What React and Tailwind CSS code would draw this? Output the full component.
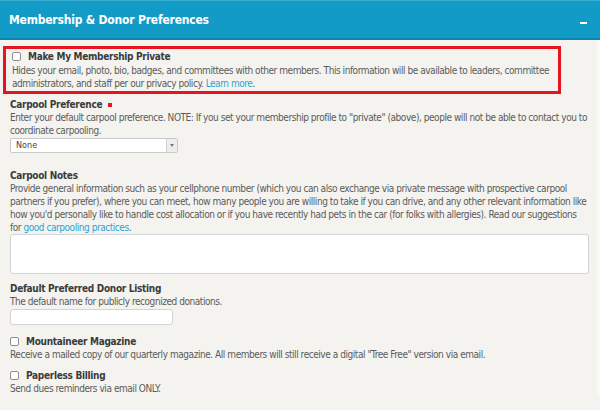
function Box() {
  return <span className="inline-block h-[9px] w-[9px] shrink-0 rounded-[2px] border border-[#8d8d8d] bg-white" />;
}

export default function App() {
  const text = "text-[10px] leading-[13px] tracking-[-0.45px] text-[#5b5b5b]";
  const label = "text-[10px] leading-[13px] tracking-[-0.3px] font-bold text-[#3b3b3b]";

  return (
    <div className="h-[410px] w-[600px] overflow-hidden bg-[#f4f3ef] font-['DejaVu_Sans_Condensed','Liberation_Sans',sans-serif]">
      <div className="flex h-[40px] items-center justify-between border-t border-[#3aaed3] border-b-2 border-b-[#0c86ab] bg-[#139bc7] pl-[9px] pr-[13px]">
        <h2 className="text-[12px] font-bold tracking-[-0.2px] text-white">Membership &amp; Donor Preferences</h2>
        <span className="mt-[6px] h-[2px] w-[7px] bg-white" />
      </div>

      <div className="border-r-[3px] border-[#fbfaf8] pt-[6px]">
        <div className="ml-[3px] w-[558px] border-[3px] border-[#e5141f] px-[6px] pt-[1px] pb-[1px]">
          <div className="flex items-center gap-[7px]">
            <Box />
            <span className={label}>Make My Membership Private</span>
          </div>
          <p className={`${text} mt-[1px]`}>
            Hides your email, photo, bio, badges, and committees with other members. This information will be available to leaders, committee administrators, and staff per our privacy policy. <span className="text-[#2ba3d6]">Learn more</span>.
          </p>
        </div>

        <div className="px-[10px] pr-[9px]">
          <div className="mt-[4px] flex items-center">
            <span className={label}>Carpool Preference</span>
            <span className="ml-[6px] h-[4px] w-[4px] bg-[#e5141f]" />
          </div>
          <p className={text}>
            Enter your default carpool preference. NOTE: If you set your membership profile to "private" (above), people will not be able to contact you to coordinate carpooling.
          </p>
          <div className="mt-[1px] flex h-[15px] w-[168px] items-center rounded-[2px] border border-[#c9c9c9] bg-white">
            <span className="flex-1 pl-[5px] text-[9px] text-[#444]">None</span>
            <span className="flex h-full w-[11px] items-center justify-center border-l border-[#d0d0d0] bg-[#ededed]">
              <span className="h-0 w-0 border-x-[2.5px] border-t-[3px] border-x-transparent border-t-[#777]" />
            </span>
          </div>

          <div className={`${label} mt-[16px]`}>Carpool Notes</div>
          <p className={text}>
            Provide general information such as your cellphone number (which you can also exchange via private message with prospective carpool partners if you prefer), where you can meet, how many people you are willing to take if you can drive, and any other relevant information like how you'd personally like to handle cost allocation or if you have recently had pets in the car (for folks with allergies). Read our suggestions for <span className="text-[#2ba3d6]">good carpooling practices</span>.
          </p>
          <div className="h-[40px] w-[579px] rounded-[3px] border border-[#d3d3d3] bg-white" />

          <div className={`${label} mt-[8px]`}>Default Preferred Donor Listing</div>
          <p className={text}>The default name for publicly recognized donations.</p>
          <div className="mt-[1px] h-[16px] w-[163px] rounded-[3px] border border-[#d3d3d3] bg-white" />

          <div className="mt-[10px] flex items-center gap-[7px]">
            <Box />
            <span className={label}>Mountaineer Magazine</span>
          </div>
          <p className={text}>Receive a mailed copy of our quarterly magazine. All members will still receive a digital "Tree Free" version via email.</p>

          <div className="mt-[8px] flex items-center gap-[7px]">
            <Box />
            <span className={label}>Paperless Billing</span>
          </div>
          <p className={text}>Send dues reminders via email ONLY.</p>
        </div>
      </div>
    </div>
  );
}
